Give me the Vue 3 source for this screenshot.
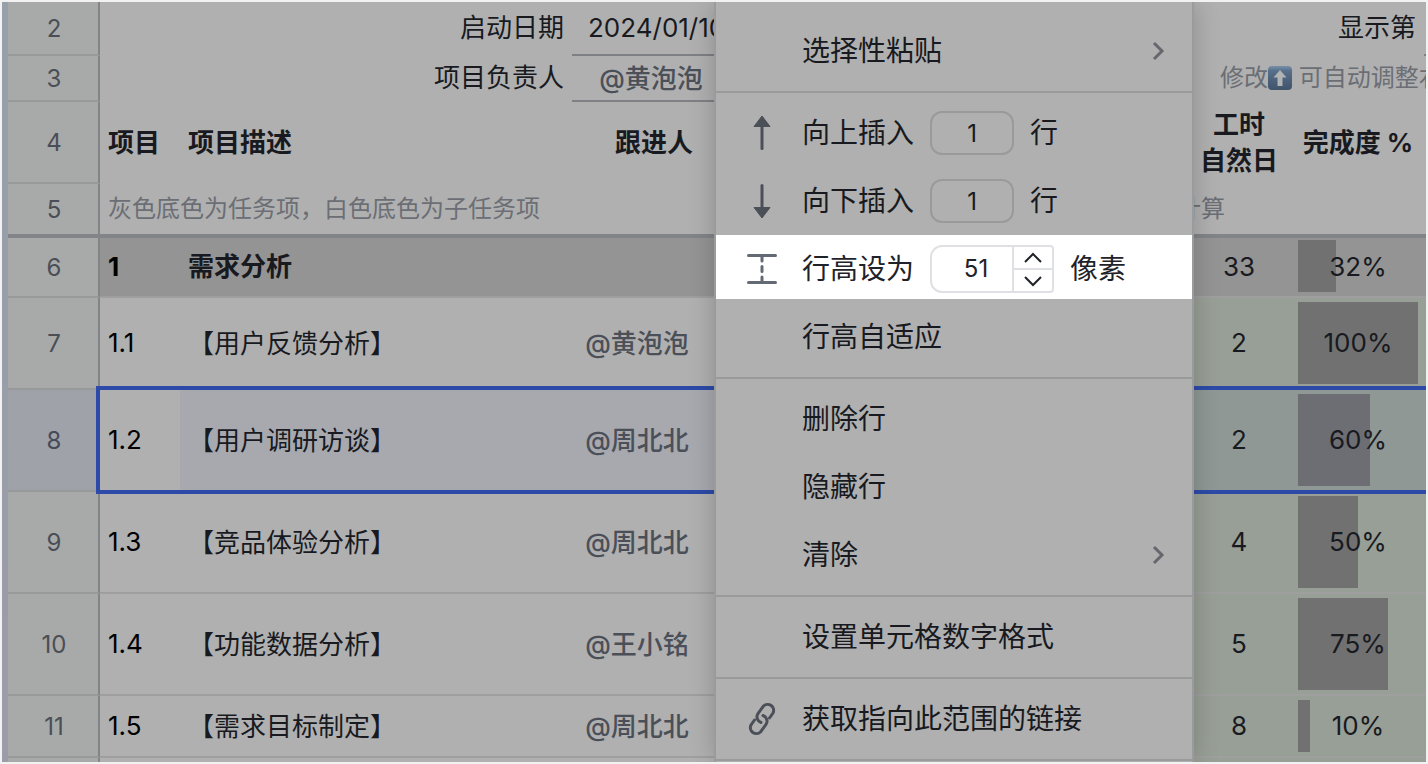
<template>
  <div class="page">
    <div class="sheet">
      <div class="sheet-edge"></div>
      <div class="grid-wrap">
        <table class="grid">
          <colgroup>
            <col class="col-num" />
            <col class="col-id" />
            <col class="col-desc" />
            <col class="col-owner" />
            <col />
            <col class="col-hours" />
            <col class="col-rate" />
            <col class="col-next" />
          </colgroup>
          <tbody>
            <tr class="head-row h54">
              <th scope="row" class="num">2</th>
              <td colspan="2" class="right">启动日期</td>
              <td class="field date">2024/01/10</td>
              <td></td>
              <td colspan="2" class="right">显示第</td>
              <td class="field"></td>
            </tr>
            <tr class="head-row h46">
              <th scope="row" class="num">3</th>
              <td colspan="2" class="right">项目负责人</td>
              <td class="field mention">@黄泡泡</td>
              <td></td>
              <td colspan="3" class="hint hint-adjust">
                修改<svg class="emoji" viewBox="0 0 24 24" aria-hidden="true">
                  <defs>
                    <linearGradient id="upBg" x1="0" y1="0" x2="0" y2="1">
                      <stop offset="0" stop-color="#7890a8" />
                      <stop offset="0.2" stop-color="#566f8b" />
                      <stop offset="1" stop-color="#40536a" />
                    </linearGradient>
                  </defs>
                  <rect width="24" height="24" rx="4" fill="url(#upBg)" />
                  <path d="M12 4L18.5 11.5H14.5V20H9.5V11.5H5.5Z" fill="#b0b2b4" />
                </svg> 可自动调整右
              </td>
            </tr>
            <tr class="head-row h82">
              <th scope="row" class="num">4</th>
              <th scope="col" class="title">项目</th>
              <th scope="col" class="title">项目描述</th>
              <th scope="col" class="title center">跟进人</th>
              <td></td>
              <th scope="col" class="title center">工时<br />自然日</th>
              <th scope="col" class="title center">完成度 %</th>
              <td></td>
            </tr>
            <tr class="head-row freeze h54">
              <th scope="row" class="num">5</th>
              <td colspan="3" class="hint">灰色底色为任务项，白色底色为子任务项</td>
              <td colspan="2" class="hint hint-calc">计算</td>
              <td colspan="2"></td>
            </tr>
            <tr
              v-for="row in rows"
              :key="row.num"
              :class="{ group: row.group, selected: row.selected }"
              :style="{ height: row.height + 'px' }"
            >
              <th scope="row" class="num">{{ row.num }}</th>
              <td class="id">{{ row.id }}</td>
              <td class="desc">{{ row.desc }}</td>
              <td class="mention owner">{{ row.owner }}</td>
              <td></td>
              <td class="center tint">{{ row.hours }}</td>
              <td class="center tint rate">
                <div class="bar-track">
                  <div class="bar" :style="{ width: row.rate + '%' }"></div>
                </div>
                <span class="rate-text">{{ row.rate }}%</span>
              </td>
              <td class="tint"></td>
            </tr>
            <tr class="last-row">
              <th class="num"></th>
              <td colspan="4"></td>
              <td colspan="3" class="tint"></td>
            </tr>
          </tbody>
        </table>
      </div>

      <div class="menu">
        <div class="menu-section first">
          <button class="menu-item" type="button">
            <span class="menu-icon"></span>选择性粘贴
            <svg class="chevron" viewBox="0 0 16 24"><path d="M4 4L12 12L4 20" /></svg>
          </button>
        </div>
        <div class="menu-section">
          <div class="menu-item">
            <span class="menu-icon">
              <svg width="36" height="36" viewBox="0 0 36 36">
                <path d="M18 12V33.5" class="stroke" />
                <path d="M18 1L26 11.5H10Z" class="fill" />
              </svg>
            </span>
            <label for="above">向上插入</label>
            <input id="above" v-model="above" class="count" type="text" />
            <span>行</span>
          </div>
          <div class="menu-item">
            <span class="menu-icon">
              <svg width="36" height="36" viewBox="0 0 36 36">
                <path d="M18 2.5V24" class="stroke" />
                <path d="M18 35L26 24.5H10Z" class="fill" />
              </svg>
            </span>
            <label for="below">向下插入</label>
            <input id="below" v-model="below" class="count" type="text" />
            <span>行</span>
          </div>
          <div class="menu-item active">
            <span class="menu-icon">
              <svg width="36" height="36" viewBox="0 0 36 36">
                <path d="M4.5 4.5H31.5M4.5 31.5H31.5" class="stroke light" />
                <path d="M18 6V10M18 15.5V20.5M18 26V30" class="stroke light" />
              </svg>
            </span>
            <label for="rowHeight">行高设为</label>
            <div class="stepper">
              <input id="rowHeight" v-model.number="rowHeight" type="text" />
              <div class="stepper-btns">
                <button type="button" aria-label="+" @click="rowHeight++">
                  <svg width="20" height="12" viewBox="0 0 20 12"><path d="M2 10L10 2L18 10" /></svg>
                </button>
                <button type="button" aria-label="-" @click="rowHeight--">
                  <svg width="20" height="12" viewBox="0 0 20 12"><path d="M2 2L10 10L18 2" /></svg>
                </button>
              </div>
            </div>
            <span>像素</span>
          </div>
          <button class="menu-item" type="button"><span class="menu-icon"></span>行高自适应</button>
        </div>
        <div class="menu-section">
          <button class="menu-item" type="button"><span class="menu-icon"></span>删除行</button>
          <button class="menu-item" type="button"><span class="menu-icon"></span>隐藏行</button>
          <button class="menu-item" type="button">
            <span class="menu-icon"></span>清除
            <svg class="chevron" viewBox="0 0 16 24"><path d="M4 4L12 12L4 20" /></svg>
          </button>
        </div>
        <div class="menu-section">
          <button class="menu-item" type="button"><span class="menu-icon"></span>设置单元格数字格式</button>
        </div>
        <div class="menu-section">
          <button class="menu-item" type="button">
            <span class="menu-icon">
              <svg width="36" height="36" viewBox="0 0 36 36">
                <path d="M25.5 17L29 12A6 6 0 0 0 19.5 5L14 12.5A6 6 0 0 0 17 21.5" class="stroke" />
                <path d="M10.5 19L7 24A6 6 0 0 0 16.5 31L22 23.5A6 6 0 0 0 19 14.5" class="stroke" />
              </svg>
            </span>获取指向此范围的链接
          </button>
        </div>
      </div>
    </div>
  </div>
</template>

<script setup>
import { ref } from 'vue'

const above = ref(1)
const below = ref(1)
const rowHeight = ref(51)

const rows = [
  { num: 6, id: '1', desc: '需求分析', owner: '', hours: 33, rate: 32, height: 60, group: true },
  { num: 7, id: '1.1', desc: '【用户反馈分析】', owner: '@黄泡泡', hours: 2, rate: 100, height: 92 },
  { num: 8, id: '1.2', desc: '【用户调研访谈】', owner: '@周北北', hours: 2, rate: 60, height: 102, selected: true },
  { num: 9, id: '1.3', desc: '【竞品体验分析】', owner: '@周北北', hours: 4, rate: 50, height: 102 },
  { num: 10, id: '1.4', desc: '【功能数据分析】', owner: '@王小铭', hours: 5, rate: 75, height: 102 },
  { num: 11, id: '1.5', desc: '【需求目标制定】', owner: '@周北北', hours: 8, rate: 10, height: 62 }
]
</script>

<style>
body { margin: 0; background: #f1f2f1; }
</style>

<style scoped>
.page { padding: 2px; font-family: Inter, "Noto Sans CJK SC", sans-serif; color: #181a1f; }
.page *, .page *::after { box-sizing: border-box; }
.sheet { position: relative; display: flex; overflow: hidden; background: #b0b0b0; }
.sheet-edge { flex: 0 0 6px; background: linear-gradient(#979fa9, #979eaa 50%, #9c9ca8); }

.grid-wrap { flex: 1; min-width: 0; }
.grid { width: 100%; table-layout: fixed; border-spacing: 0; font-size: 26px; line-height: 36px; }
.col-num { width: 92px; }
.col-id { width: 80px; }
.col-desc { width: 392px; }
.col-owner { width: 164px; }
.col-hours { width: 106px; }
.col-rate { width: 132px; }
.col-next { width: 2px; }
.h54 { height: 54px; }
.h46 { height: 46px; }
.h82 { height: 82px; }

td, th { padding: 0 0 0 8px; text-align: left; white-space: nowrap; border-bottom: 2px solid #9f9f9f; }
td:empty { padding: 0; }
.head-row td, .head-row th { border-bottom-color: transparent; }
.num, .head-row .num { padding: 2px 0 0 2px; text-align: center; font-size: 24px; font-weight: 400; color: #4b4e56; background: #a8aaa9; border-right: 2px solid #838488; border-bottom-color: #989a99; }
.freeze td, .freeze .num { border-bottom: 4px solid #838488; }
.right { padding-right: 8px; text-align: right; }
.head-row .field { border-bottom-color: #7f8084; }
.field.date { padding-left: 16px; }
.title { padding-top: 2px; font-weight: 700; }
.center { padding-left: 0; text-align: center; }
.hint { font-size: 24px; color: #6b6e74; }
.hint-adjust { padding-left: 34px; overflow: hidden; }
.hint-calc { padding-right: 67px; text-align: right; }
.emoji { width: 24px; height: 24px; vertical-align: -4px; }
.mention { font-weight: 500; color: #4b4f58; text-align: center; }
.field.mention { padding: 2px 6px 0 0; }
.owner { padding: 2px 34px 0 0; }
.desc { padding-top: 2px; }
.id { color: #000; }
.tint { background: #989f96; }

.group td { background: #949494; }
.group .id, .group .desc { padding-top: 0; font-weight: 700; }

.rate { position: relative; }
.bar-track { position: absolute; top: 4px; right: 6px; bottom: 4px; left: 6px; }
.group .bar-track { top: 2px; }
.bar { height: 100%; background: #717171; }
.rate-text { position: relative; }

.selected { position: relative; }
.selected .num { background: #a0a2a9; color: #464b57; }
.selected td { background: #a7a9af; }
.selected .id { background: #b0b0b0; }
.selected .tint { background: #8f9894; }
.selected .bar { background: #6c6e74; }
.selected .num::after { content: ''; position: absolute; z-index: 1; top: -4px; right: -4px; bottom: -2px; left: 88px; border: 4px solid #2d4aa8; }
.last-row { height: 4px; }
.last-row td, .last-row th { border-bottom: 0; }

.menu { position: absolute; z-index: 2; top: 0; bottom: 0; left: 50%; width: 480px; background: #b0b0b0; border: solid #9a9b9c; border-width: 0 2px; box-shadow: 0 0 24px rgba(0, 0, 0, 0.2); font-size: 28px; line-height: 40px; }
.menu-section { padding: 6px 0; border-bottom: 2px solid #999a9a; }
.menu-section.first { padding-top: 15px; }
.menu-item { display: flex; align-items: center; width: 100%; height: 68px; padding: 0; border: 0; background: none; font: inherit; color: inherit; text-align: left; }
.menu-item.active { height: 64px; margin-bottom: 4px; padding-top: 4px; background: #fff; color: #1f2329; }
.menu-icon { display: flex; justify-content: center; flex: 0 0 86px; }
.menu-icon svg { margin-left: 6px; }
.stroke { fill: none; stroke: #4b4f58; stroke-width: 3; stroke-linecap: round; }
.stroke.light { stroke: #646a73; }
.fill { fill: #4b4f58; stroke: #4b4f58; stroke-width: 1; stroke-linejoin: round; }
.chevron { width: 16px; height: 24px; margin-left: auto; margin-right: 26px; fill: none; stroke: #65676c; stroke-width: 3; }
.count, .stepper input { font: inherit; font-size: 24px; color: inherit; text-align: center; background: transparent; outline: none; }
.count { width: 84px; height: 44px; margin: 0 16px; padding: 0; border: 2px solid #999a9a; border-radius: 12px; }
.stepper { display: flex; width: 124px; height: 48px; margin: 0 16px; border: 2px solid #dee0e3; border-radius: 12px 4px 4px 12px; }
.stepper input { flex: 1; min-width: 0; padding: 0 0 0 8px; border: 0; }
.stepper-btns { display: flex; flex-direction: column; width: 40px; border-left: 2px solid #dee0e3; }
.stepper-btns button { flex: 1; display: flex; align-items: center; justify-content: center; padding: 0; border: 0; background: none; }
.stepper-btns button + button { border-top: 2px solid #dee0e3; }
.stepper-btns path { fill: none; stroke: #1f2329; stroke-width: 2; }
</style>
